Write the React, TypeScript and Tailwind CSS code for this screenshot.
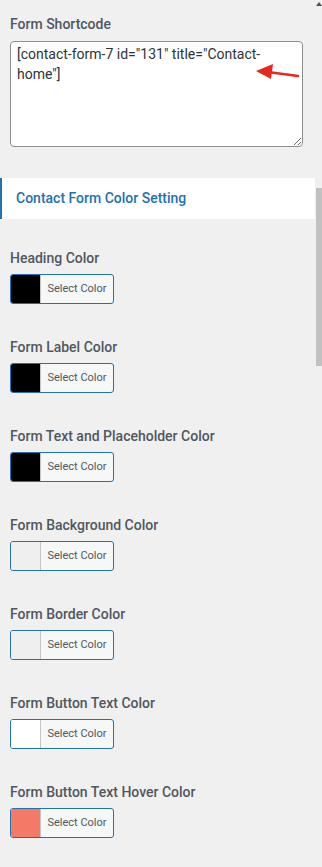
import React from 'react';

const colorFields = [
  { label: 'Heading Color', swatch: 'bg-[#000000]' },
  { label: 'Form Label Color', swatch: 'bg-[#000000]' },
  { label: 'Form Text and Placeholder Color', swatch: 'bg-[#000000]' },
  { label: 'Form Background Color', swatch: 'bg-[#efefef]' },
  { label: 'Form Border Color', swatch: 'bg-[#efefef]' },
  { label: 'Form Button Text Color', swatch: 'bg-[#ffffff]' },
  { label: 'Form Button Text Hover Color', swatch: 'bg-[#f47a67]' },
];

function ColorPicker({ label, swatch }: { label: string; swatch: string }) {
  return (
    <div className="px-[10px] pb-[33px]">
      <div className="text-[14px] leading-[20px] font-medium text-[#50575e] mb-[6px]">{label}</div>
      <button className="flex h-[30px] w-[104px] items-stretch overflow-hidden rounded-[3px] border border-[#2271b1] bg-[#f6f7f7]">
        <span className={`w-[30px] shrink-0 border-r border-[#c3c4c7] ${swatch}`} />
        <span className="flex-1 flex items-center justify-center text-[11px] text-[#50575e]">Select Color</span>
      </button>
    </div>
  );
}

export default function App() {
  return (
    <div className="min-h-screen bg-[#f0f0f1] flex font-['Roboto',sans-serif]">
      <div className="w-[315px] shrink-0">
        {/* shortcode */}
        <div className="px-[10px] pt-[14px]">
          <div className="text-[14px] leading-[20px] font-medium text-[#50575e] mb-[7px]">Form Shortcode</div>
          <div className="relative w-[293px]">
            <textarea
              readOnly
              defaultValue={'[contact-form-7 id="131" title="Contact-home"]'}
              className="block h-[106px] w-full rounded-[4px] border border-[#8c8f94] bg-white px-[6px] py-[2px] text-[14px] leading-[20px] text-[#2c3338] outline-none"
            />
            <svg className="absolute left-[244px] top-[22px]" width="48" height="18" viewBox="0 0 48 18">
              <line x1="44" y1="13" x2="14" y2="9" stroke="#e8271f" strokeWidth="2.5" strokeLinecap="round" />
              <polygon points="2,8 19,1 17,16" fill="#e8271f" />
            </svg>
          </div>
        </div>

        {/* section heading */}
        <div className="mt-[31px] mb-[29px] h-[41px] flex items-center bg-white border-l-2 border-[#2271b1] pl-[14px]">
          <span className="text-[14px] font-medium text-[#2271b1]">Contact Form Color Setting</span>
        </div>

        {colorFields.map((f) => (
          <ColorPicker key={f.label} label={f.label} swatch={f.swatch} />
        ))}
      </div>

      {/* scrollbar */}
      <div className="w-[7px] flex flex-col items-center">
        <div className="mt-[2px] h-0 w-0 border-l-[3px] border-r-[3px] border-b-[4px] border-l-transparent border-r-transparent border-b-[#505050]" />
        <div className="mt-[182px] h-[178px] w-[6px] bg-[#c1c1c1]" />
      </div>
    </div>
  );
}
